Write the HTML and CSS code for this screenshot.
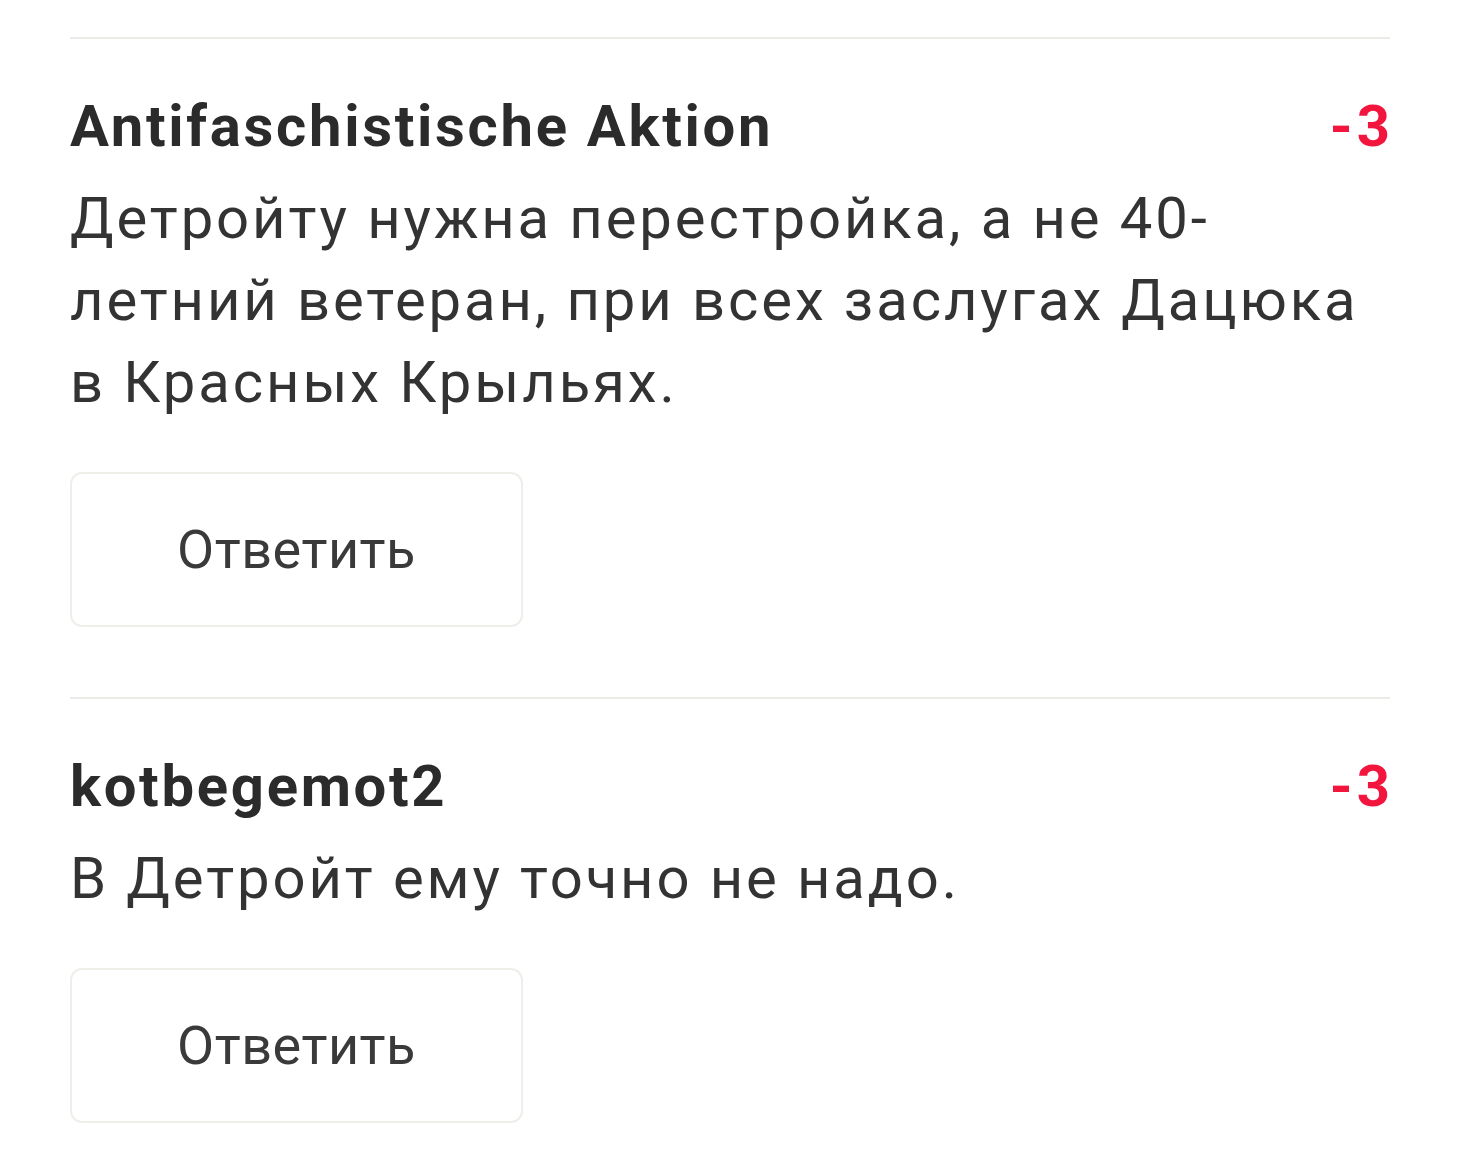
FILE: index.html
```html
<!DOCTYPE html>
<html lang="ru">
<head>
<meta charset="utf-8">
<title>Комментарии</title>
<link rel="stylesheet" href="styles.css">
</head>
<body>
<div class="comments">
  <div class="comment">
    <div class="comment-head">
      <span class="author">Antifaschistische Aktion</span>
      <span class="score">-3</span>
    </div>
    <p class="text">Детройту нужна перестройка, а не 40-летний ветеран, при всех заслугах Дацюка в Красных Крыльях.</p>
    <button class="reply">Ответить</button>
  </div>
  <div class="comment">
    <div class="comment-head">
      <span class="author">kotbegemot2</span>
      <span class="score">-3</span>
    </div>
    <p class="text">В Детройт ему точно не надо.</p>
    <button class="reply">Ответить</button>
  </div>
</div>
</body>
</html>
```
FILE: styles.css
```css
html, body {
  margin: 0;
  padding: 0;
  background: #ffffff;
}
body {
  font-family: Roboto, "Noto Sans", sans-serif;
  color: #2d2d2d;
}
.comments {
  padding: 37px 70px 0;
}
.comment {
  border-top: 2px solid #ecebe7;
  padding-top: 46px;
  padding-bottom: 70px;
}
.comment-head {
  display: flex;
  justify-content: space-between;
  align-items: baseline;
  font-size: 58px;
  line-height: 82px;
  font-weight: 700;
}
.author {
  color: #2b2b2b;
  letter-spacing: 2.7px;
}
.score {
  color: #f2163f;
  letter-spacing: 4px;
  margin-right: -4px;
}
.text {
  margin: 10px 0 0;
  font-size: 58px;
  line-height: 82px;
  letter-spacing: 2.9px;
  color: #333333;
}
.reply {
  display: block;
  margin-top: 49px;
  width: 453px;
  height: 155px;
  box-sizing: border-box;
  border: 2px solid #efeee9;
  border-radius: 12px;
  background: #ffffff;
  font-family: Roboto, "Noto Sans", sans-serif;
  font-size: 54px;
  letter-spacing: 0.5px;
  color: #3a3a3a;
  padding: 0;
}
```
